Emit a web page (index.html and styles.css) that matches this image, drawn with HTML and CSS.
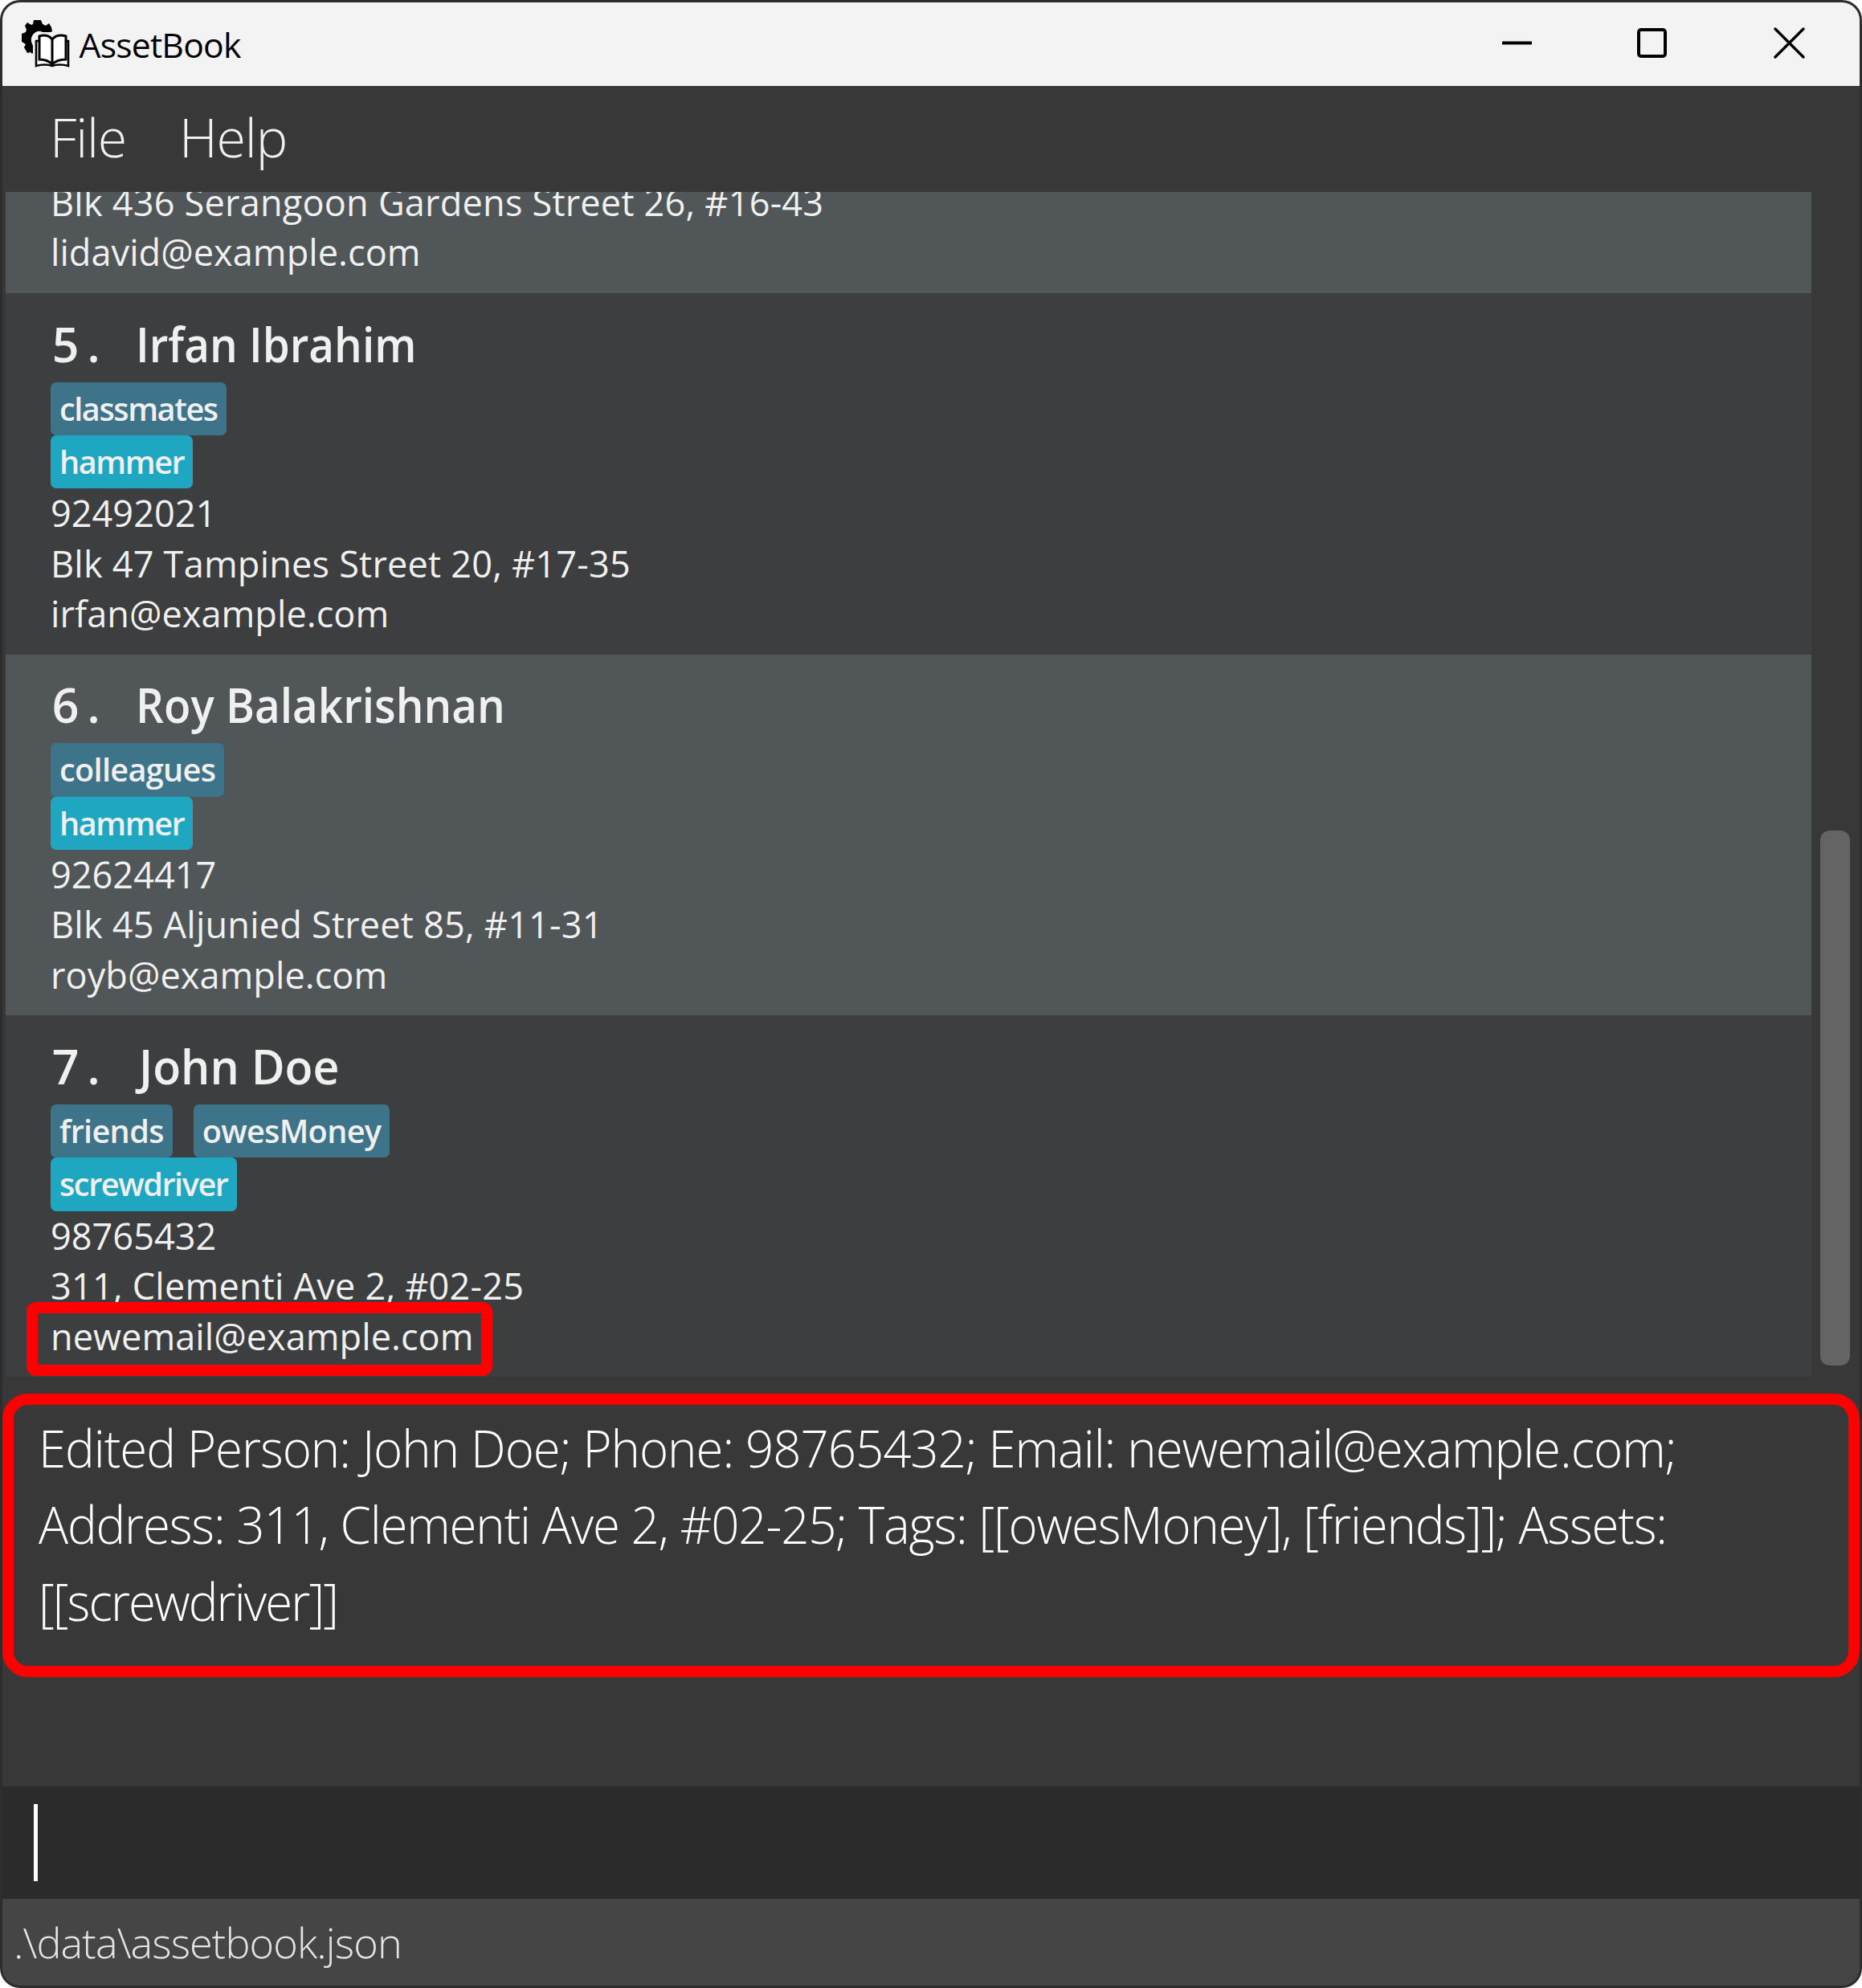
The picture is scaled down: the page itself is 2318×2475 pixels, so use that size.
FILE: index.html
```html
<!DOCTYPE html>
<html lang="en">
<head>
<meta charset="utf-8">
<title>AssetBook</title>
<link rel="stylesheet" href="styles.css">
</head>
<body>
<div class="window">
  <header class="titlebar">
    <svg class="logo" width="62" height="62" viewBox="0 0 62 62">
      <path d="M14 6l1-5h9l2 5 4 2 4-3 3 5 1 5-2 1H26q-5-3-10 1-5 4-4 11l2 5v9l-1 1-2-2-4 1-4-7 2-4-5-3V18l5-2 1-3-2-5 3-4 5 3z" fill="#000"/>
      <path d="M22 20q9-2 16 4 7-6 17-4v6h4v33q-11-4-21 0-10-4-21 0V26h5z" fill="#fff"/>
      <path d="M22 50V21q10-3 16 4 6-7 17-4v29q-11 0-17 6-6-6-16-6zM38 25v31" fill="none" stroke="#000" stroke-width="3"/>
      <path d="M22 27h-4v31q11-3 20 0 9-3 20 0V27h-3" fill="none" stroke="#000" stroke-width="2.6"/>
    </svg>
    <span class="title">AssetBook</span>
    <svg class="controls" width="380" height="40" viewBox="0 0 380 40" fill="none" stroke="#000">
      <path d="M1 19.5H38" stroke-width="4"/>
      <rect x="171" y="3" width="33" height="33" rx="3" stroke-width="4"/>
      <path d="M341 2L376 37M376 2L341 37" stroke-width="3.4" stroke-linecap="round"/>
    </svg>
  </header>
  <nav class="menubar"><span>File</span><span>Help</span></nav>
  <main class="list-area">
    <div class="list">
      <article class="person even">
        <p class="detail">Blk 436 Serangoon Gardens Street 26, #16-43</p>
        <p class="detail email">lidavid@example.com</p>
      </article>
      <article class="person">
        <h2 class="name"><span class="cell">5</span><span class="cell dot">.</span><span class="label">Irfan Ibrahim</span></h2>
        <div class="chips"><span class="chip">classmates</span></div>
        <div class="chips"><span class="chip asset">hammer</span></div>
        <p class="detail phone">92492021</p>
        <p class="detail">Blk 47 Tampines Street 20, #17-35</p>
        <p class="detail email">irfan@example.com</p>
      </article>
      <article class="person even">
        <h2 class="name"><span class="cell">6</span><span class="cell dot">.</span><span class="label">Roy Balakrishnan</span></h2>
        <div class="chips"><span class="chip loose">colleagues</span></div>
        <div class="chips"><span class="chip asset">hammer</span></div>
        <p class="detail phone">92624417</p>
        <p class="detail">Blk 45 Aljunied Street 85, #11-31</p>
        <p class="detail email">royb@example.com</p>
      </article>
      <article class="person">
        <h2 class="name"><span class="cell">7</span><span class="cell dot">.</span><span class="label">John Doe</span></h2>
        <div class="chips"><span class="chip loose">friends</span><span class="chip loose">owesMoney</span></div>
        <div class="chips"><span class="chip asset">screwdriver</span></div>
        <p class="detail phone">98765432</p>
        <p class="detail">311, Clementi Ave 2, #02-25</p>
        <p class="detail email">newemail@example.com</p>
        <span class="marker"></span>
      </article>
    </div>
    <div class="scrollbar"><div class="thumb"></div></div>
  </main>
  <section class="result">
    <p>Edited Person: John Doe; Phone: 98765432; Email: newemail@example.com;</p>
    <p>Address: 311, Clementi Ave 2, #02-25; Tags: [[owesMoney], [friends]]; Assets:</p>
    <p>[[screwdriver]]</p>
  </section>
  <div class="command"><span class="caret"></span></div>
  <footer class="status">.\data\assetbook.json</footer>
</div>
</body>
</html>
```
FILE: styles.css
```css
* { box-sizing: border-box; }
body { margin: 0; background: #fff; font-family: "Open Sans", "Noto Sans", sans-serif; }
h2, p { margin: 0; }

.window {
  display: flex; flex-direction: column;
  width: 2318px; height: 2475px;
  border: 3px solid #2d2d2d; border-radius: 25px;
  background: #383838; overflow: hidden;
}

.titlebar {
  flex: none; display: flex; align-items: center;
  height: 104px; padding: 0 66px 0 24px;
  background: #f3f3f3; color: #000;
}
.logo { flex: none; }
.title { margin-left: 9.5px; font-size: 42.7px; line-height: 103px; letter-spacing: -0.8px; }
.controls { margin-left: auto; margin-bottom: 2px; }

.menubar {
  flex: none; display: flex; gap: 66px;
  height: 132px; padding: 1.3px 0 0 59px;
  color: #f0f0f0; font-size: 66.4px; font-weight: 300; line-height: 124px; letter-spacing: -1.2px;
}

.list-area { flex: none; display: flex; height: 1475px; padding-left: 4px; }
.list {
  width: 2248px; flex: none; overflow: hidden;
  display: flex; flex-direction: column; justify-content: flex-end;
}
.person {
  position: relative; flex: none;
  padding: 0 0 19.1px 56px;
  background: #3c3e3f; color: #f0f0f0;
}
.person.even { background: #515658; }
.name {
  height: 110.6px; padding: 14.8px 0 0 1px;
  font-size: 59px; font-weight: 600; line-height: 96.4px; white-space: pre;
}
.cell { display: inline-block; width: 35px; text-align: center; }
.dot { margin-right: 35px; }
.label { display: inline-block; transform: scaleX(0.928); transform-origin: 0 50%; }
.person:last-child .label { transform: translateX(4px) scaleX(0.97); }
.chips { display: flex; gap: 26px; }
.chip {
  height: 66.4px; padding: 0 11px; border-radius: 7px;
  background: #3e7489; font-size: 39.7px; font-weight: 600; line-height: 66.8px; letter-spacing: -1.45px;
}
.chip.loose { letter-spacing: -0.7px; }
.chip.asset { background: #1fa7c2; }
.detail { font-size: 45.1px; line-height: 62.4px; letter-spacing: 0.2px; white-space: pre; }
.detail.phone { letter-spacing: 0; }
.detail.email { letter-spacing: 0.05px; }
.marker {
  position: absolute; left: 26px; top: 357px; width: 580px; height: 92px;
  border: 14px solid #f00; border-radius: 12px;
}

.scrollbar { flex: 1; padding: 795px 0 0 11px; }
.thumb { width: 37px; height: 666px; border-radius: 12px; background: #646464; }

.result {
  flex: none; width: 2312px; height: 353px; margin: 21px 0 136px 0;
  padding: 5.8px 0 0 31px; border: 14px solid #f00; border-radius: 32px;
  color: #fff; font-size: 65px; font-weight: 300; line-height: 95.6px; white-space: nowrap;
}
.result p { transform: scaleX(0.95); transform-origin: 0 50%; letter-spacing: -1.09px; }
.result p:nth-child(2) { letter-spacing: -1.23px; }
.result p:nth-child(3) { letter-spacing: -2px; }
.command { flex: none; height: 140px; padding: 22px 0 0 39px; background: #2b2b2b; }
.caret { display: block; width: 4.5px; height: 96px; background: #fff; }
.status {
  flex: 1; padding-left: 14px; background: #454545; color: #e4e4e4;
  font-size: 52.2px; font-weight: 300; line-height: 107.6px; letter-spacing: -0.9px;
}
```
